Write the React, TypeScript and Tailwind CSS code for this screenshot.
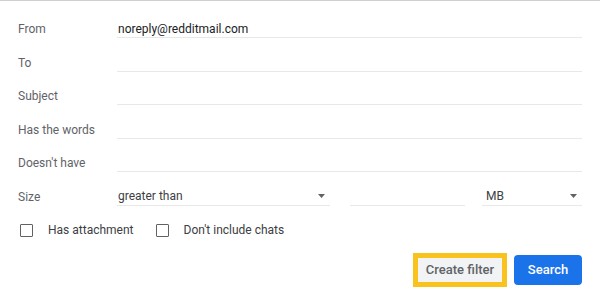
import React from "react";

const font = { fontFamily: "Roboto, 'Noto Sans', Arial, sans-serif" };

function Arrow() {
  return (
    <svg width="7" height="4" viewBox="0 0 7 4" className="shrink-0">
      <path d="M0 0 L7 0 L3.5 4 Z" fill="#5f6368" />
    </svg>
  );
}

function FieldRow({ label, value }: { label: string; value?: string }) {
  return (
    <div className="flex h-[33.5px] items-center">
      <div className="w-[99px] shrink-0 text-[12px] text-[#5f6368]">{label}</div>
      <div className="flex h-[18px] flex-1 items-center border-b border-[#e8e8e8] pl-[1px] text-[12px] text-[#202124]">
        {value}
      </div>
    </div>
  );
}

function Checkbox({ label }: { label: string }) {
  return (
    <div className="flex items-center">
      <div className="h-[13px] w-[13px] rounded-[1px] border-[1.5px] border-[#5f6368]" />
      <span className="ml-[15px] text-[12px] text-[#3c4043]">{label}</span>
    </div>
  );
}

export default function App() {
  return (
    <div style={font} className="h-[297px] w-[600px] overflow-hidden border-t border-[#cfcfcf] bg-white">
      <div className="px-[18px] pt-[11.25px]">
        <FieldRow label="From" value="noreply@redditmail.com" />
        <FieldRow label="To" />
        <FieldRow label="Subject" />
        <FieldRow label="Has the words" />
        <FieldRow label="Doesn't have" />
        <div className="flex h-[33.5px] items-center">
          <div className="w-[99px] shrink-0 text-[12px] text-[#5f6368]">Size</div>
          <div className="flex h-[18px] w-[213px] items-center justify-between border-b border-[#e8e8e8] pl-[1px] pr-[5px] text-[12px] text-[#3c4043]">
            <span>greater than</span>
            <Arrow />
          </div>
          <div className="ml-[20px] h-[18px] w-[115px] border-b border-[#e8e8e8]" />
          <div className="ml-[17px] flex h-[18px] flex-1 items-center justify-between border-b border-[#e8e8e8] pl-[4px] pr-[5px] text-[12px] text-[#3c4043]">
            <span>MB</span>
            <Arrow />
          </div>
        </div>
        <div className="flex h-[33.5px] items-center pl-[2px]">
          <Checkbox label="Has attachment" />
          <div className="ml-[22px]">
            <Checkbox label="Don't include chats" />
          </div>
        </div>
        <div className="mt-[6px] flex items-center justify-end gap-[7px]">
          <div className="flex h-[34px] items-center border-[5px] border-[#f9c21d] bg-[#f9c21d]">
            <div className="flex h-[24px] w-[84px] items-center justify-center bg-[#f1f3f4] text-[13px] font-medium text-[#5f6368]">
              Create filter
            </div>
          </div>
          <div className="flex h-[30px] w-[68px] items-center justify-center rounded-[4px] bg-[#1a73e8] text-[13px] font-medium text-white">
            Search
          </div>
        </div>
      </div>
    </div>
  );
}
